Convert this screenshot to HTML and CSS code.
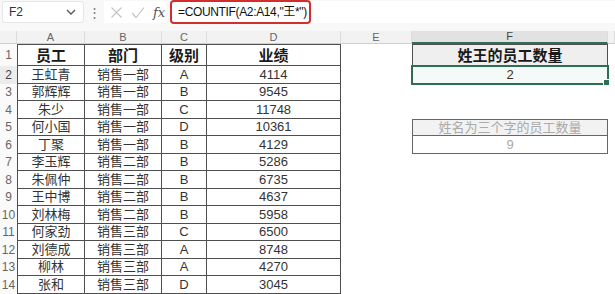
FILE: index.html
```html
<!DOCTYPE html>
<html lang="zh-CN">
<head>
    <meta charset="UTF-8">
    <title>COUNTIF 姓王的员工数量</title>
    <link rel="stylesheet" href="styles.css">
</head>
<body>
    <div class="toolbar">
        <div class="namebox">
            <span>F2</span>
            <svg class="chev" width="10" height="6" viewBox="0 0 10 6"><path d="M1 1l4 4 4-4" fill="none" stroke="#555" stroke-width="1.3"/></svg>
        </div>
        <div class="dots">⋮</div>
        <div class="fx-tools">
            <svg width="13" height="13" viewBox="0 0 13 13"><path d="M1.5 1.5l10 10M11.5 1.5l-10 10" stroke="#c4c4c4" stroke-width="1.2"/></svg>
            <svg width="14" height="13" viewBox="0 0 14 13"><path d="M1 7l4 4.5L13 1.5" fill="none" stroke="#c4c4c4" stroke-width="1.2"/></svg>
            <span class="fx">fx</span>
        </div>
        <div class="formula">=COUNTIF(A2:A14,"王*")</div>
        <div class="formula-rest"></div>
    </div>

    <div class="sheet">
        <!-- column headers -->
        <div class="ch corner"></div>
        <div class="ch">A</div>
        <div class="ch">B</div>
        <div class="ch">C</div>
        <div class="ch">D</div>
        <div class="ch">E</div>
        <div class="ch active">F</div>
        <div class="ch"></div>

        <div class="rh">1</div>
        <div class="t first top head">员工</div>
        <div class="t top head">部门</div>
        <div class="t top head">级别</div>
        <div class="t top head">业绩</div>
        <div class="c"></div>
        <div class="f-title">姓王的员工数量</div>
        <div class="c"></div>

        <div class="rh active">2</div>
        <div class="t first">王虹青</div>
        <div class="t">销售一部</div>
        <div class="t">A</div>
        <div class="t">4114</div>
        <div class="c"></div>
        <div class="f-value selected">2</div>
        <div class="c"></div>

        <div class="rh">3</div>
        <div class="t first">郭辉辉</div>
        <div class="t">销售一部</div>
        <div class="t">B</div>
        <div class="t">9545</div>
        <div class="c"></div>
        <div class="c"></div>
        <div class="c"></div>

        <div class="rh">4</div>
        <div class="t first">朱少</div>
        <div class="t">销售一部</div>
        <div class="t">C</div>
        <div class="t">11748</div>
        <div class="c"></div>
        <div class="c"></div>
        <div class="c"></div>

        <div class="rh">5</div>
        <div class="t first">何小国</div>
        <div class="t">销售一部</div>
        <div class="t">D</div>
        <div class="t">10361</div>
        <div class="c"></div>
        <div class="f-title faded">姓名为三个字的员工数量</div>
        <div class="c"></div>

        <div class="rh">6</div>
        <div class="t first">丁聚</div>
        <div class="t">销售一部</div>
        <div class="t">B</div>
        <div class="t">4129</div>
        <div class="c"></div>
        <div class="f-value faded">9</div>
        <div class="c"></div>

        <div class="rh">7</div>
        <div class="t first">李玉辉</div>
        <div class="t">销售二部</div>
        <div class="t">B</div>
        <div class="t">5286</div>
        <div class="c"></div>
        <div class="c"></div>
        <div class="c"></div>

        <div class="rh">8</div>
        <div class="t first">朱佩仲</div>
        <div class="t">销售二部</div>
        <div class="t">B</div>
        <div class="t">6735</div>
        <div class="c"></div>
        <div class="c"></div>
        <div class="c"></div>

        <div class="rh">9</div>
        <div class="t first">王中博</div>
        <div class="t">销售二部</div>
        <div class="t">B</div>
        <div class="t">4637</div>
        <div class="c"></div>
        <div class="c"></div>
        <div class="c"></div>

        <div class="rh">10</div>
        <div class="t first">刘林梅</div>
        <div class="t">销售二部</div>
        <div class="t">B</div>
        <div class="t">5958</div>
        <div class="c"></div>
        <div class="c"></div>
        <div class="c"></div>

        <div class="rh">11</div>
        <div class="t first">何家劲</div>
        <div class="t">销售三部</div>
        <div class="t">C</div>
        <div class="t">6500</div>
        <div class="c"></div>
        <div class="c"></div>
        <div class="c"></div>

        <div class="rh">12</div>
        <div class="t first">刘德成</div>
        <div class="t">销售三部</div>
        <div class="t">A</div>
        <div class="t">8748</div>
        <div class="c"></div>
        <div class="c"></div>
        <div class="c"></div>

        <div class="rh">13</div>
        <div class="t first">柳林</div>
        <div class="t">销售三部</div>
        <div class="t">A</div>
        <div class="t">4270</div>
        <div class="c"></div>
        <div class="c"></div>
        <div class="c"></div>

        <div class="rh">14</div>
        <div class="t first">张和</div>
        <div class="t">销售三部</div>
        <div class="t">D</div>
        <div class="t">3045</div>
        <div class="c"></div>
        <div class="c"></div>
        <div class="c"></div>
    </div>
</body>
</html>
```

FILE: styles.css
```css
body {
    margin: 0;
    width: 615px;
    height: 294px;
    overflow: hidden;
    background: #fff;
    font-family: "Liberation Sans", "Noto Sans CJK SC", sans-serif;
    color: #333;
}
.toolbar {
    display: flex;
    align-items: center;
    height: 31px;
    padding-bottom: 7px;
    box-sizing: border-box;
    background: #f8f8f8;
}
.namebox {
    display: flex;
    align-items: center;
    justify-content: space-between;
    width: 82px;
    height: 22px;
    margin-left: 2px;
    padding: 0 6px;
    box-sizing: border-box;
    background: #fff;
    border: 1px solid #e6e6e6;
    border-radius: 3px;
    font-size: 12px;
    color: #333;
}
.chev {
    margin-right: 1px;
}
.dots {
    width: 16px;
    margin-left: 2px;
    text-align: center;
    font-size: 13px;
    color: #777;
}
.fx-tools {
    display: flex;
    align-items: center;
    gap: 8px;
    height: 22px;
    width: 62px;
    margin-left: 2px;
    padding-left: 6px;
    box-sizing: border-box;
    background: #fff;
}
.fx {
    font-family: "DejaVu Serif", "Liberation Serif", serif;
    font-style: italic;
    font-size: 13px;
    color: #555;
}
.formula {
    height: 24px;
    width: 141px;
    margin-left: 4px;
    padding-left: 6px;
    box-sizing: border-box;
    border: 2px solid #d42d2d;
    border-radius: 4px;
    background: #fff;
    font-size: 12px;
    letter-spacing: -0.35px;
    line-height: 20px;
    color: #111;
    white-space: nowrap;
    overflow: hidden;
}
.formula-rest {
    flex: 1;
    height: 22px;
    background: #fff;
}
.sheet {
    display: grid;
    grid-template-columns: 17px 68px 77px 45px 134px 71px 196px 1fr;
    grid-template-rows: 13px 22px repeat(13, 17.5px);
}
.sheet > div {
    box-sizing: border-box;
    display: flex;
    align-items: center;
    justify-content: center;
    white-space: nowrap;
    line-height: 1;
}
.ch {
    background: #f2f2f2;
    border-right: 1px solid #dcdcdc;
    border-bottom: 1px solid #cfcfcf;
    font-size: 11px;
    color: #666;
}
.ch.active {
    background: #e2e2e2;
    border-bottom: 2px solid #2f6e52;
    color: #444;
}
.rh {
    font-size: 12px;
    color: #666;
    background: #fafafa;
}
.rh.active {
    background: #ececec;
    color: #444;
}
.t {
    border-right: 1px solid #4f4f4f;
    border-bottom: 1px solid #4f4f4f;
    font-size: 13px;
    color: #333;
}
.t.first {
    border-left: 1px solid #4f4f4f;
}
.t.top {
    border-top: 1px solid #4f4f4f;
}
.t.head {
    font-size: 15px;
    font-weight: bold;
    color: #1a1a1a;
}
.f-title {
    border: 1px solid #4f4f4f;
    background: #efefef;
    font-size: 15px;
    font-weight: bold;
    color: #1a1a1a;
}
.f-value {
    border: 1px solid #4f4f4f;
    border-top: none;
    font-size: 13px;
}
.f-title.faded {
    border-color: #666;
    font-size: 13px;
    font-weight: normal;
    color: #aaa;
    background: #f2f2f2;
}
.f-value.faded {
    border-color: #666;
    color: #aaa;
}
.selected {
    position: relative;
    background: #f3faf7;
    outline: 2px solid #2f6e52;
    outline-offset: -1px;
}
.selected::after {
    content: "";
    position: absolute;
    right: -3px;
    bottom: -3px;
    width: 5px;
    height: 5px;
    background: #2f6e52;
    border: 1px solid #fff;
}
```
